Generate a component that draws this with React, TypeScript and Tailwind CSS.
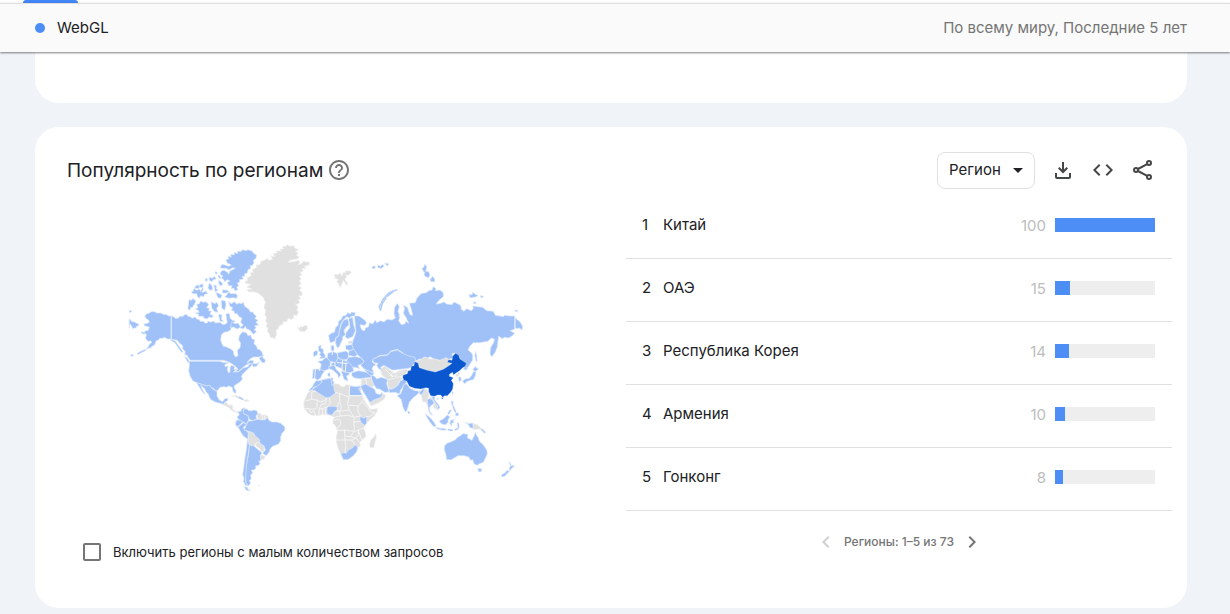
import React from "react";

const regions = [
  { name: "Китай", value: 100 },
  { name: "ОАЭ", value: 15 },
  { name: "Республика Корея", value: 14 },
  { name: "Армения", value: 10 },
  { name: "Гонконг", value: 8 },
];

type Sheet = { shift: string; blue?: string[]; gray?: string[]; dark?: string[]; lines?: string[]; strokes?: string[] };

const sheets: Sheet[] = [
  // Alaska, Canada and the Arctic islands
  {
    shift: "translate(0 0)",
    blue: [
      "75,243 80,236 88,235 93,230 105,230 110,234 122,234 130,238 140,239 146,243 153,243 153,313 146,312 140,311 134,307 128,310 120,310 114,316 108,318 104,330 96,334 92,339 84,340 75,346 86,334 88,328 96,322 92,318 84,319 80,315 76,308 80,300 72,292 76,288 85,286 88,276 72,272 74,266 82,265 88,262 86,256 78,250",
      "28,252 33,256 36,261 42,260 48,264 54,266 57,271 50,274 48,280 42,278 38,282 34,270 30,268 28,278",
      "28,228 32,226 35,229 31,233",
      "155,243 162,246 166,250 174,250 180,244 190,244 192,240 200,238 204,244 212,246 216,250 226,246 230,252 238,254 242,260 250,258 254,264 262,264 264,258 272,262 280,258 286,264 300,262 306,268 316,268 322,262 320,252 318,236 328,236 330,248 336,256 346,258 340,262 344,270 334,276 332,285 322,290 312,292 304,300 302,316 306,326 310,334 320,336 332,342 340,348 342,360 347,366 354,362 352,346 360,338 362,325 356,314 358,302 368,290 380,294 384,302 392,300 396,312 404,314 402,326 410,334 412,342 420,344 426,352 430,362 415,366 400,366 390,372 380,384 392,376 402,378 398,386 410,386 418,380 410,394 400,396 396,388 390,384 378,390 366,400 355,409 345,410 354,402 348,396 338,388 325,380 310,376 212,376 206,370 202,362 194,358 196,350 188,342 188,332 178,324 172,316 162,314 155,312",
      "418,370 426,362 430,370 436,374 434,384 426,382",
      "194,364 202,370 210,382 204,382",
      "318,74 326,72 324,64 334,66 332,58 342,60 344,52 352,56 354,48 362,50 368,44 378,47 384,44 396,48 402,56 410,60 408,70 400,76 402,84 396,92 390,92 392,100 384,104 382,114 374,116 374,124 366,124 370,132 358,134 360,140 352,144 356,152 350,156 354,164 344,168 342,160 334,160 336,152 326,152 322,142 330,138 322,134 314,140 310,132 304,130 308,122 300,118 304,108 312,106 322,112 326,118 330,108 338,104 346,100 338,98 328,104 318,100 308,100 300,98 306,88 314,90 326,94 334,90 322,84",
      "326,172 334,176 348,176 352,182 350,190 338,188 328,190 314,186 320,180",
      "326,200 334,206 344,200 350,208 356,204 364,206 370,202 374,214 380,218 386,222 392,232 398,230 402,238 410,244 404,250 414,256 408,262 416,270 404,272 408,278 402,284 410,290 400,298 394,290 388,284 380,282 376,274 370,282 360,278 370,270 362,262 366,250 356,244 352,236 344,236 342,228 334,226 338,218 330,214",
      "226,222 234,218 230,208 238,206 242,198 250,202 258,200 266,208 260,218 268,220 266,228 274,228 270,238 280,242 276,248 266,246 262,252 252,250 250,244 236,244 236,238 226,234 238,232 234,226",
      "208,194 216,196 218,190 228,198 224,206 218,216 212,218 210,226 204,222",
      "214,172 220,168 222,160 230,166 238,162 242,170 250,172 256,168 264,176 254,178 250,186 242,182 238,190 232,184 230,176 220,176",
      "224,156 232,150 240,154 236,160 228,160",
      "238,150 248,146 250,156 242,158", "264,158 268,144 276,152 278,164 270,166",
      "268,126 276,130 284,124 288,132 280,134 276,140 268,136", "282,150 290,152 288,160 294,166 286,170",
      "288,172 298,176 306,180 302,190 294,188", "296,136 308,144 306,152 298,150", "308,164 322,166 328,170 318,174 308,174",
      "274,200 284,206 290,202 296,212 290,220 294,232 284,230 276,220", "304,196 316,198 318,210 314,226 306,220",
      "296,238 306,240 304,252 310,260 300,258", "336,262 346,266 354,264 362,276 352,282 340,276 332,278",
      "256,132 262,130 262,138 256,138", "286,110 292,112 290,118 286,116",
    ],
    strokes: ["74,346 62,352 54,356", "38,360 34,362", "66,292 72,296", "156,316 166,322 176,336 186,350", "244,168 248,162", "300,128 296,122"],
  },
  // Greenland, Iceland and Svalbard
  {
    shift: "translate(330 0)",
    gray: [
      "44,140 54,136 52,128 64,122 60,114 70,112 66,104 80,98 78,90 88,90 94,78 104,76 110,70 118,76 128,72 122,62 134,66 130,56 142,54 138,48 154,48 150,42 162,42 156,36 166,34 172,30 180,34 190,32 196,40 206,44 196,50 206,54 198,60 208,66 200,72 180,76 174,82 192,80 204,76 210,82 204,90 214,86 222,78 228,82 236,80 240,88 230,92 222,94 228,100 216,100 220,108 210,112 216,120 208,124 214,132 208,138 214,146 206,152 214,158 208,166 216,172 216,182 206,182 212,192 204,194 210,202 202,208 196,206 204,216 200,226 206,230 200,242 190,240 192,248 182,254 176,248 170,260 160,260 158,268 148,272 144,282 138,286 140,298 134,312 128,308 122,308 118,296 112,290 114,280 108,274 112,264 106,258 110,248 104,238 108,228 102,218 106,202 100,188 94,182 84,174 70,170 56,170 50,164 66,162 50,156 64,148 50,146",
      "202,276 212,280 210,274 218,276 226,271 232,274 232,282 222,290 210,288",
      "314,118 324,120 330,114 336,124 340,112 348,114 346,108 360,108 364,112 356,120 346,120 350,126 344,132 352,144 350,152 344,142 340,136 336,146 330,158 326,146 320,140 326,134 316,130",
    ],
  },
  // South and Central America, United States
  {
    shift: "translate(180 345)",
    blue: [
      "28,34 118,34 132,38 148,37 134,44 136,50 144,48 142,58 145,68 150,66 150,54 154,46 164,50 162,58 170,58 160,66 174,66 182,60 190,54 204,50 210,40 216,44 210,52 204,56 198,62 192,68 188,72 184,80 188,86 182,94 174,100 164,106 162,112 168,122 167,131 160,126 156,112 146,108 140,112 132,110 120,112 112,122 104,120 100,114 94,114 90,106 80,108 62,102 50,98 38,92 30,78 26,62 28,48",
      "50,98 62,102 80,108 90,106 94,114 104,121 111,124 111,138 118,150 128,155 134,146 144,145 142,153 134,156 132,163 122,160 108,157 94,150 88,142 86,134 78,125 74,116 62,106 66,116 72,126 75,134 68,126 62,118 56,108",
      "174,186 182,184 186,176 194,173 190,182 192,192 204,196 206,210 202,216 200,224 190,216 174,208 172,200 178,194",
      "194,176 202,178 206,182 215,182 222,180 230,182 234,190 228,198 230,206 218,212 208,208 204,196 192,192 190,182",
      "170,210 182,211 188,216 178,226 174,230 166,224",
      "174,232 190,218 200,224 190,232 194,240 204,246 204,268 190,258 182,246 176,234 168,228",
      "204,214 218,212 232,208 248,210 258,208 262,202 268,212 276,216 290,216 302,220 314,230 315,240 306,250 302,260 302,272 296,282 286,286 276,290 270,298 268,306 258,317 248,310 256,300 252,288 240,280 238,268 226,258 220,248 206,244 192,240 200,224",
      "208,286 222,288 240,304 246,308 241,316 242,332 236,334 240,340 236,346 226,348 228,354 222,360 214,360 218,368 212,376 214,386 208,392 212,398 206,408 198,400 196,380 200,340 206,310",
      "203,268 208,286 205,310 200,340 197,375 197,398 204,408 196,406 190,394 192,384 188,374 191,355 194,330 199,300",
      "192,410 202,412 204,418 213,422 200,421",
    ],
    gray: [
      "120,160 130,164 134,157 140,158 146,164 158,166 158,178 168,185 176,183 177,188 164,186 156,182 148,174 138,168",
      "156,139 168,136 178,142 186,148 176,146 166,140", "190,150 204,149 208,153 194,154",
      "234,190 240,190 246,196 256,194 264,200 258,208 236,208 232,200",
      "204,246 216,243 224,254 238,264 242,278 228,278 222,288 212,290 206,276",
      "229,279 241,279 252,290 252,304 242,304 240,296 228,288", "243,314 256,320 252,328 243,328",
      "236,405 240,405 239,408",
    ],
    lines: ["246,196 248,208", "254,196 254,208", "140,160 150,168"],
    strokes: ["178,142 188,148"],
  },
  // Africa
  {
    shift: "translate(525 375)",
    gray: [
      "54,86 66,66 76,60 100,54 114,54 112,66 120,72 130,72 140,80 148,80 152,74 164,76 184,80 196,78 200,86 196,96 206,116 212,128 216,134 226,148 248,146 246,154 238,168 228,176 214,190 206,204 210,214 213,230 200,240 194,248 196,258 188,262 184,276 174,288 160,298 146,299 138,284 130,266 124,246 124,232 128,212 122,198 114,190 114,180 118,172 108,166 94,164 84,163 70,167 62,166 50,166 38,158 28,146 26,132 30,118 38,100",
      "242,222 244,234 240,246 236,262 226,264 224,252 228,240 236,232",
    ],
    blue: [
      "52,88 64,80 80,66 80,60 110,54 110,66 116,78 118,94 122,98 104,112 94,114 62,94",
      "64,62 78,62 80,68 68,78 56,82 50,90 40,92 52,80 56,72", "108,54 114,54 113,62 117,68 112,76",
      "163,78 184,80 196,78 196,86 190,84 202,106 165,107", "97,140 108,139 126,140 126,150 118,158 112,166 102,164 96,160",
      "195,170 206,174 216,170 214,192 208,196 196,184", "138,280 148,278 154,280 160,270 172,264 180,256 187,258 188,266 184,276 174,288 160,298 146,299",
    ],
    lines: [
      "34,122 50,118 50,96 62,94", "50,118 66,120 66,144 52,148 40,146 28,146", "66,120 76,126 88,122 96,114", "94,114 92,130 78,134 72,148 72,166",
      "104,112 106,130 97,140", "122,98 134,100 134,124 126,140", "134,100 162,112 164,78", "162,112 158,130 162,150 134,154 126,150", "134,124 140,144 134,154 136,168 118,172",
      "165,107 202,107", "162,136 190,138 202,124 206,116", "190,138 188,150 196,168 178,172 162,150", "202,126 218,142 228,156 240,158 226,168 214,170",
      "118,180 134,178 138,192 128,204", "136,168 160,166 178,172 176,186 178,204 176,214 160,212 148,210 126,212", "148,210 150,240 124,240", "150,228 166,230 176,216 190,210 206,204",
      "178,186 196,184", "166,230 180,234 190,226 190,210", "150,240 152,258 150,278", "150,240 170,240 180,254", "170,240 184,234 192,246", "82,148 82,164", "90,140 92,164", "72,148 96,142", "190,212 196,228 200,240",
      "40,146 48,158 56,152 62,166", "112,166 120,154 134,154",
    ],
  },
  // Europe, western Russia and the Middle East
  {
    shift: "translate(540 195)",
    blue: [
      // Russia
      "164,48 176,48 186,54 196,62 200,70 194,76 180,74 182,82 186,90 194,92 196,84 206,80 208,68 218,72 226,60 230,68 242,62 252,66 262,58 276,60 286,54 282,40 284,22 292,10 298,20 294,34 300,48 296,62 304,74 314,72 318,64 326,70 318,52 310,40 314,26 310,16 322,22 330,44 338,46 334,28 328,10 346,8 350,-4 358,-14 366,-20 380,-22 386,-28 396,-30 400,-40 408,-34 406,-28 420,-30 430,-22 430,-10 418,0 408,12 422,10 432,6 440,12 456,14 462,6 474,12 482,16 484,28 492,34 500,26 514,32 520,26 518,18 532,20 548,22 560,32 580,34 586,46 600,48 610,50 614,46 630,48 644,48 644,88 630,92 644,100 636,108 626,114 614,112 606,116 596,108 594,122 592,140 586,156 576,170 570,162 572,142 580,130 584,118 574,114 564,124 550,126 540,128 520,128 510,138 504,150 514,158 518,166 518,180 510,192 498,210 490,208 496,196 496,188 482,184 478,168 464,159 456,161 460,174 446,178 428,184 408,180 390,170 380,176 356,178 346,186 330,172 318,170 308,158 292,148 272,153 262,164 240,166 222,176 216,186 228,194 220,198 216,206 222,218 208,214 192,206 182,196 188,190 192,182 184,174 172,164 162,150 157,144 156,132 160,120 168,96 166,76",
      "646,52 650,58 658,64 664,72 668,80 666,90 658,84 650,86 646,82",
      // Nordic countries
      "88,120 86,106 94,100 104,96 106,84 114,76 116,64 124,58 128,48 138,46 142,38 152,42 154,36 166,38 164,48 156,48 148,54 140,50 130,60 122,72 118,92 116,108 108,112 104,124 92,128",
      "118,94 124,72 132,60 142,56 146,66 146,76 138,82 132,92 136,104 128,110 128,118 122,130 118,140 112,144 106,128 108,114 116,108",
      "146,56 158,52 160,70 166,92 158,110 142,116 136,110 138,98 150,82 148,66",
      // British Isles, western and central Europe
      "56,138 64,136 62,144 70,148 70,158 76,166 74,174 58,176 64,168 58,164 62,158 56,152", "40,158 46,152 54,154 52,164 42,170",
      "40,208 58,207 74,212 66,224 62,234 52,240 44,234 38,236", "54,184 66,182 78,172 92,182 90,198 86,208 72,212 60,208 64,194",
      "84,160 98,155 112,160 114,174 108,188 90,184 82,174", "94,136 102,138 102,152 94,152", "114,158 138,153 146,160 144,178 128,180 114,172",
      "138,136 156,134 160,146 150,152 138,148", "148,152 162,148 172,164 164,170 146,166",
      "146,172 168,170 184,174 192,184 186,192 174,196 178,206 166,202 156,202 146,190 140,184",
      "94,190 108,186 114,174 128,180 142,184 152,192 158,202 162,212 150,218 136,216 126,206 112,200 96,200",
      "86,200 104,196 108,208 120,218 122,226 116,234 112,222 98,210 88,206", "84,220 90,218 90,230 84,228", "124,214 144,218 150,222 140,228 144,244 132,238 128,226",
      "156,218 176,212 196,216 212,222 214,232 196,234 180,236 164,234 156,228", "192,208 208,214 222,220 216,228 206,222",
      // Central Asia and the Gulf
      "218,178 240,168 262,166 272,155 292,150 308,160 326,168 344,172 348,184 342,192 330,204 316,206 300,208 286,210 276,210 262,202 252,196 242,202 246,210 236,206 230,196 234,190 222,188",
      "214,226 222,228 230,236 244,232 262,238 260,252 268,276 254,277 240,268 230,266 222,254 216,240",
      "266,268 280,266 294,256 300,244 312,236 320,246 310,258 302,270 298,282 286,277 270,278",
      "182,258 196,252 214,262 224,268 228,280 240,284 246,276 246,288 238,294 222,300 210,308 200,292 190,276",
    ],
    gray: [
      "144,124 158,122 158,131 146,131", "126,206 138,212 134,220 124,212", "242,208 254,198 264,206 284,220 298,212 318,208 326,212 314,222 304,228 296,232 280,236 262,238 246,226",
      "262,240 282,236 300,230 308,236 298,244 294,256 280,266 266,266", "184,238 212,234 224,256 214,262 196,252 184,258",
      "210,308 222,300 238,294 247,280 258,286 252,298 236,308 218,316 212,318",
    ],
    lines: ["296,48 306,48", "280,214 270,228 290,228 300,222", "196,236 200,250", "98,156 96,164", "128,180 126,206", "112,188 142,190", "138,190 136,214", "58,208 58,212", "46,210 44,234", "256,208 278,230", "104,188 106,200"],
    strokes: ["242,31 238,20 244,10 248,0 256,-10 266,-20 278,-26 290,-30", "242,26 248,8 258,-6", "262,-12 278,-24", "500,206 498,198"],
  },
  // Arctic Ocean islands
  {
    shift: "translate(840 60)",
    blue: [
      "66,40 72,36 74,28 80,34 80,42 76,48 86,50 90,60 86,68 78,66 72,60 74,52 70,48", "90,74 98,64 104,72 104,80 94,80",
      "208,118 216,120 218,112 226,118 234,122 226,126 210,128", "242,122 250,124 248,128 242,127", "220,142 226,140 228,146 222,146", "344,166 354,166 352,170 346,169",
      "226,290 230,300 231,318 228,320 225,304", "-84,36 -76,32 -74,38 -80,42", "-66,30 -58,34 -52,28 -48,34 -56,40 -66,38", "-44,24 -34,26 -36,32 -42,30",
    ],
  },
  // China, southern Asia and Oceania
  {
    shift: "translate(810 330)",
    blue: [
      "32,146 38,132 40,120 50,116 56,126 74,134 92,138 96,134 104,130 100,142 94,150 86,144 80,150 68,160 58,172 54,186 50,198 45,200 38,184 34,164 28,158 22,152",
      "54,198 60,202 58,208 54,204", "112,164 120,160 130,168 132,176 122,182 118,190 120,200 128,210 122,208 116,198 114,182",
      "124,154 134,156 134,164 146,180 150,188 140,196 144,184 134,170", "106,206 114,212 124,222 132,232 138,242 132,246 122,234 114,222",
      "138,246 148,250 160,250 172,254 160,256 142,252", "148,228 160,222 172,210 180,216 174,224 174,232 166,240 154,236",
      "182,226 196,222 188,228 194,232 186,234 184,244 180,236", "184,168 190,170 188,180 194,186 186,182", "196,206 204,202 206,212 198,212", "178,196 174,206",
      "226,232 234,236 248,234 250,250 240,248 236,240", "186,140 190,142 188,150",
      "218,108 226,102 238,100 246,90 250,80 258,80 256,92 250,104 240,106 230,110 224,116", "250,72 256,64 260,70 266,72 258,78 252,78", "206,96 212,96 214,106 208,110",
      "164,302 172,294 184,290 196,284 204,276 212,272 218,266 234,268 232,278 246,286 252,274 256,262 260,272 264,276 268,288 280,300 290,314 292,326 286,340 280,352 268,356 262,361 252,356 248,344 242,346 236,336 222,332 204,332 194,338 184,344 170,344 168,330 163,314",
      "264,370 276,372 272,381 266,380", "356,350 362,356 364,362 374,362 366,370 358,378 358,368 362,364", "352,376 358,380 350,386 346,392 336,396 334,390 344,384",
      "142,160 146,162 142,164",
    ],
    gray: [
      "82,46 96,42 102,36 112,38 120,42 136,42 150,46 168,38 178,44 172,52 184,54 174,64 160,72 136,80 112,76 90,68 84,56 74,50",
      "94,146 102,134 110,132 118,152 114,158 116,170 114,184 108,172 98,170", "118,156 128,158 134,170 144,180 142,190 134,192 130,182 134,178 126,166",
      "250,236 260,238 270,246 276,254 266,252 250,254", "196,92 208,80 208,88 204,94", "18,88 38,78 40,92 24,94",
    ],
    dark: [
      "38,96 40,90 52,86 54,78 62,76 64,64 72,62 74,50 84,54 88,68 112,76 136,81 160,73 174,64 186,55 172,52 176,44 186,46 188,34 196,25 206,30 210,42 222,50 229,54 226,64 218,68 208,78 198,84 190,90 188,82 178,88 178,94 190,98 184,106 190,116 188,132 182,142 172,152 164,152 158,157 152,150 142,150 134,154 122,152 116,140 116,130 108,128 92,132 74,130 58,124 50,108 42,106",
      "154,158 160,158 157,163",
    ],
    lines: ["58,128 74,136 92,138", "86,138 88,144"],
    strokes: ["176,254 186,256", "196,254 204,250", "176,206 182,196", "204,236 206,246", "190,186 196,200", "276,254 284,262"],
  },
];

function WorldMap() {
  return (
    <svg viewBox="0 0 1230 780" className="block w-[410px] max-w-full" role="img" aria-label="Карта популярности по регионам">
      {sheets.map((s) => (
        <g key={s.shift} transform={s.shift} strokeLinejoin="round" strokeLinecap="round" fill="none">
          {s.gray?.map((p) => <polygon key={p} points={p} fill="#e0e0e0" stroke="#efefef" strokeWidth="2" />)}
          {s.blue?.map((p) => <polygon key={p} points={p} fill="#a0c1f8" stroke="#dae7fd" strokeWidth="2" />)}
          {s.dark?.map((p) => <polygon key={p} points={p} fill="#0b57d0" stroke="#c4d8f8" strokeWidth="1" />)}
          {s.lines?.map((p) => <polyline key={p} points={p} stroke="#f5f5f5" strokeWidth="3" />)}
          {s.strokes?.map((p) => <polyline key={p} points={p} stroke="#b4cefa" strokeWidth="5" />)}
        </g>
      ))}
    </svg>
  );
}

function Icon({ d, className }: { d: string; className: string }) {
  return (
    <svg viewBox="0 0 24 24" fill="currentColor" className={className} aria-hidden="true">
      <path d={d} />
    </svg>
  );
}

export default function App() {
  return (
    <div className="min-h-screen bg-[#f0f3f8] pb-[7px] font-[Inter,'Noto_Sans',sans-serif] text-[#202124]">
      <div className="h-[3px] bg-white pl-[23px]">
        <div className="relative h-1 w-[55px] rounded-t-[3px] bg-[#4285f4]" />
      </div>
      <header className="relative flex h-[49px] items-center border-t border-[#e0e0e0] bg-[#fafafa] pr-[43px] pl-[35px] text-[15px] shadow-[0_1px_2px_rgba(0,0,0,0.5)]">
        <span className="mr-3 size-[10px] rounded-full bg-[#4c8df6]" />
        <span>WebGL</span>
        <span className="ml-auto text-[#757575]">По всему миру, Последние 5 лет</span>
      </header>
      <main className="flex flex-col gap-6 pr-[43px] pl-[35px]">
        <section className="h-[51px] rounded-b-3xl bg-white" />
        <section className="rounded-3xl bg-white pt-[25px] pb-[45px]">
          <div className="flex h-[37px] items-center pr-8 pl-8">
            <h2 className="pt-px text-[19px]">Популярность по регионам</h2>
            <button aria-label="Справка" className="ml-1 pb-px text-[#757575]">
              <Icon className="size-6" d="M11 18h2v-2h-2v2zm1-16C6.48 2 2 6.48 2 12s4.48 10 10 10 10-4.48 10-10S17.52 2 12 2zm0 18c-4.41 0-8-3.59-8-8s3.59-8 8-8 8 3.59 8 8-3.59 8-8 8zm0-14c-2.21 0-4 1.79-4 4h2c0-1.1.9-2 2-2s2 .9 2 2c0 2-3 1.75-3 5h2c0-2.25 3-2.5 3-5 0-2.21-1.79-4-4-4z" />
            </button>
            <div className="relative ml-auto h-[37px] w-[98px]">
              <select aria-label="Детализация" className="h-full w-full appearance-none rounded-lg border border-[#e0e0e0] bg-white pl-[11px] text-[15px]">
                <option>Регион</option>
                <option>Город</option>
              </select>
              <Icon className="pointer-events-none absolute top-[6px] right-[5px] size-6" d="M7 10l5 5 5-5z" />
            </div>
            <div className="ml-4 flex gap-4 pb-px text-[#444746]">
              <button aria-label="Скачать">
                <Icon className="size-6" d="M13 4v7.6l2.6-2.6L17 10.4l-5 5-5-5L8.4 9l2.6 2.6V4zM4 15h2v4h12v-4h2v4a2 2 0 0 1-2 2H6a2 2 0 0 1-2-2z" />
              </button>
              <button aria-label="Встроить">
                <Icon className="size-6" d="M9.4 16.6L4.8 12l4.6-4.6L8 6l-6 6 6 6 1.4-1.4zm5.2 0l4.6-4.6-4.6-4.6L16 6l6 6-6 6-1.4-1.4z" />
              </button>
              <button aria-label="Поделиться">
                <svg viewBox="0 0 24 24" className="size-6" fill="none" stroke="currentColor" strokeWidth="2" aria-hidden="true">
                  <circle cx="5" cy="12" r="2" />
                  <circle cx="18" cy="5" r="2" />
                  <circle cx="18" cy="19" r="2" />
                  <path d="M7 11l9.2-4.9M7 13l9.2 4.9" />
                </svg>
              </button>
            </div>
          </div>
          <div className="flex">
            <div className="flex w-[591px] flex-col pt-[46px]">
              <div className="pl-[85px]">
                <WorldMap />
              </div>
              <label className="mt-[47px] flex items-center gap-3 pl-12 text-[13px]">
                <input type="checkbox" className="size-[18px] appearance-none rounded-[2px] border-2 border-[#757575] bg-white" />
                <span className="pt-px">Включить регионы с малым количеством запросов</span>
              </label>
            </div>
            <div className="mr-[15px] flex-1 pt-[6px]">
              <table className="w-full text-[15px]">
                <tbody>
                  {regions.map((r, i) => (
                    <tr key={r.name} className="h-[63px] border-b border-[#e0e0e0]">
                      <td className="w-[37px] pb-[2px] pl-4">{i + 1}</td>
                      <td className="pb-[2px]">{r.name}</td>
                      <td className="pr-[9px] pb-px text-right text-[#bdbdbd]">{r.value}</td>
                      <td className="w-[117px] pr-[17px] pb-[3px]">
                        <div className="h-[14px] bg-[#eeeeee]">
                          <div className="h-full bg-[#4c8df6]" style={{ width: `${r.value}%` }} />
                        </div>
                      </td>
                    </tr>
                  ))}
                </tbody>
              </table>
              <nav className="mt-[19px] flex items-center justify-center gap-1.5 text-[12px] font-medium text-[#757575]">
                <button aria-label="Назад" disabled className="text-[#d0d0d0]">
                  <Icon className="size-6" d="M15.41 7.41L14 6l-6 6 6 6 1.41-1.41L10.83 12z" />
                </button>
                <span>Регионы: 1–5 из 73</span>
                <button aria-label="Вперёд">
                  <Icon className="size-6" d="M10 6L8.59 7.41 13.17 12l-4.58 4.59L10 18l6-6z" />
                </button>
              </nav>
            </div>
          </div>
        </section>
      </main>
    </div>
  );
}
